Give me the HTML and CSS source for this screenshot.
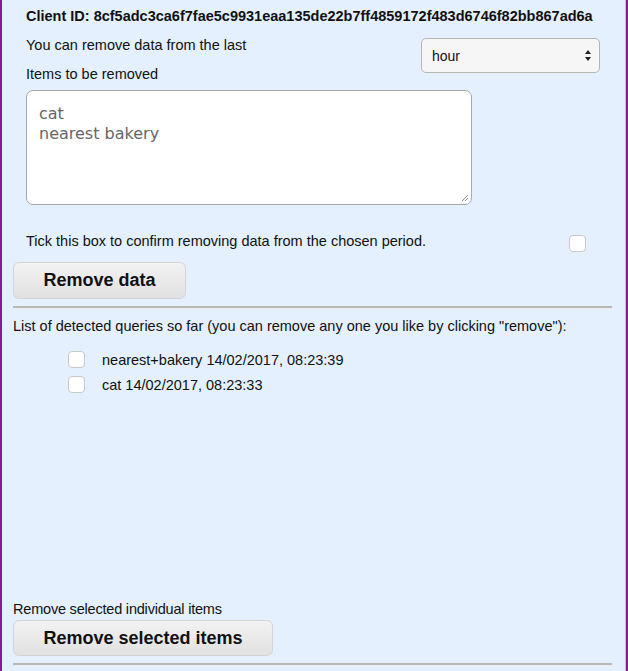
FILE: index.html
```html
<!DOCTYPE html>
<html>
<head>
<meta charset="utf-8">
<link rel="stylesheet" href="styles.css">
</head>
<body>
<div class="frame">
  <div class="top">
    <div class="client">Client ID: 8cf5adc3ca6f7fae5c9931eaa135de22b7ff4859172f483d6746f82bb867ad6a</div>
    <div class="period-row">
      <div class="period-left">
        <div class="lbl">You can remove data from the last</div>
        <div class="lbl items-lbl">Items to be removed</div>
      </div>
      <div class="select"><span>hour</span>
        <svg width="6" height="11" viewBox="0 0 6 11"><path d="M3 0L6 4H0z M3 11L0 7H6z" fill="#222"/></svg>
      </div>
    </div>
    <div class="textarea">
      <div>cat</div>
      <div>nearest bakery</div>
      <svg class="grip" width="8" height="8" viewBox="0 0 8 8"><path d="M7 1L1 7M7 4L4 7" stroke="#888" stroke-width="1"/></svg>
    </div>
    <div class="confirm-row">
      <span class="lbl">Tick this box to confirm removing data from the chosen period.</span>
      <span class="cb"></span>
    </div>
  </div>
  <div class="btn btn-data">Remove data</div>
  <div class="hr"></div>
  <div class="lbl list-lbl">List of detected queries so far (you can remove any one you like by clicking "remove"):</div>
  <ul class="queries">
    <li><span class="cb"></span><span>nearest+bakery 14/02/2017, 08:23:39</span></li>
    <li><span class="cb"></span><span>cat 14/02/2017, 08:23:33</span></li>
  </ul>
  <div class="spacer"></div>
  <div class="sel-lbl">Remove selected individual items</div>
  <div class="btn btn-sel">Remove selected items</div>
  <div class="hr hr2"></div>
</div>
</body>
</html>
```
FILE: styles.css
```css
html, body { margin: 0; padding: 0; }
body {
  width: 628px; height: 671px; overflow: hidden;
  font-family: "Liberation Sans", Arial, sans-serif;
  color: #111;
}
.frame {
  box-sizing: border-box;
  width: 628px; height: 671px;
  background: #e4f0fe;
  border-left: 2px solid #8a1a94;
  border-right: 2px solid #8a1a94;
  box-shadow: inset -1px 0 0 #c4b8e0;
  padding: 0 14px 0 11px;
  display: flex; flex-direction: column;
}
.top { padding-left: 13px; }
.client {
  font-weight: bold; font-size: 14.5px;
  margin-top: 8px; line-height: 17px;
}
.lbl { font-size: 14.5px; line-height: 16px; }
.period-row { display: flex; justify-content: space-between; margin-top: 12px; padding-right: 12px; }
.period-left { display: flex; flex-direction: column; }
.items-lbl { margin-top: 13px; }
.select {
  box-sizing: border-box;
  width: 179px; height: 35px; margin-top: 1px;
  background: #f6f6f6; border: 1px solid #b5b5b5; border-radius: 5px;
  display: flex; align-items: center; justify-content: space-between;
  padding: 0 8px 0 10px; font-size: 14px;
}
.textarea {
  position: relative; box-sizing: border-box;
  width: 446px; height: 115px; margin-top: 8px;
  background: #fff; border: 1px solid #a8a8a8; border-radius: 7px;
  padding: 13px 12px 11px;
  font-family: "DejaVu Sans", sans-serif; font-size: 16px; line-height: 20px;
  color: #666;
}
.grip { position: absolute; right: 2px; bottom: 2px; }
.confirm-row {
  display: flex; justify-content: space-between; align-items: flex-start;
  margin-top: 28px; padding-right: 26px;
}
.confirm-row .cb { margin-top: 2px; }
.cb {
  display: inline-block; box-sizing: border-box;
  width: 17px; height: 17px; background: #fff;
  border: 1px solid #c9c9c9; border-radius: 4px;
}
.btn {
  box-sizing: border-box;
  background: linear-gradient(#f2f2f2, #e1e1e1);
  border: 1px solid #d4d4d4; border-radius: 6px;
  font-weight: bold; font-size: 18px;
  display: flex; align-items: center; justify-content: center;
}
.btn-data { width: 173px; height: 37px; margin-top: 10px; }
.hr { height: 2px; background: #b8b8b8; border-bottom: 1px solid #ececec; margin-top: 7px; }
.list-lbl { margin-top: 9px; }
.queries { list-style: none; margin: 13px 0 0; padding: 0 0 0 55px; }
.queries li {
  display: flex; align-items: center; gap: 17px;
  font-size: 14.5px; height: 25px;
}
.spacer { flex: 1; }
.sel-lbl { font-size: 14.5px; line-height: 16px; letter-spacing: -0.2px; }
.btn-sel { width: 260px; height: 36px; margin-top: 3px; }
.hr2 { margin-top: 7px; margin-bottom: 5px; }
```
